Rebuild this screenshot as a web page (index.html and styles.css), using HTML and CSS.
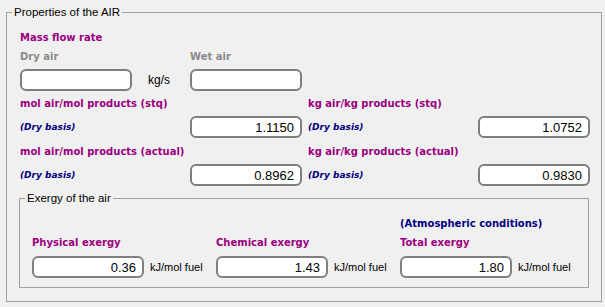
FILE: index.html
```html
<!DOCTYPE html>
<html lang="en">

<head>
    <meta charset="UTF-8">
    <title>Properties of the AIR</title>
    <link rel="stylesheet" href="styles.css">
</head>

<body>
    <fieldset class="panel">
        <legend>Properties of the AIR</legend>
        <div class="panel-body">
            <div class="title mass-title">Mass flow rate</div>
            <div class="mass">
                <div class="sub">Dry air</div>
                <div></div>
                <div class="sub">Wet air</div>
                <input type="text" class="box">
                <span class="unit">kg/s</span>
                <input type="text" class="box">
            </div>

            <div class="ratios">
                <div class="ratio">
                    <div class="title">mol air/mol products (stq)</div>
                    <div class="ratio-row">
                        <span class="basis">(Dry basis)</span>
                        <input type="text" class="box num" value="1.1150">
                    </div>
                    <div class="title">mol air/mol products (actual)</div>
                    <div class="ratio-row">
                        <span class="basis">(Dry basis)</span>
                        <input type="text" class="box num" value="0.8962">
                    </div>
                </div>
                <div class="ratio">
                    <div class="title">kg air/kg products (stq)</div>
                    <div class="ratio-row">
                        <span class="basis">(Dry basis)</span>
                        <input type="text" class="box num" value="1.0752">
                    </div>
                    <div class="title">kg air/kg products (actual)</div>
                    <div class="ratio-row">
                        <span class="basis">(Dry basis)</span>
                        <input type="text" class="box num" value="0.9830">
                    </div>
                </div>
            </div>

            <fieldset class="exergy">
                <legend>Exergy of the air</legend>
                <div class="exergy-body">
                    <div class="ex-col">
                        <div class="note"></div>
                        <div class="title">Physical exergy</div>
                        <div class="ex-row">
                            <input type="text" class="box num" value="0.36">
                            <span class="unit">kJ/mol fuel</span>
                        </div>
                    </div>
                    <div class="ex-col">
                        <div class="note"></div>
                        <div class="title">Chemical exergy</div>
                        <div class="ex-row">
                            <input type="text" class="box num" value="1.43">
                            <span class="unit">kJ/mol fuel</span>
                        </div>
                    </div>
                    <div class="ex-col">
                        <div class="note">(Atmospheric conditions)</div>
                        <div class="title">Total exergy</div>
                        <div class="ex-row">
                            <input type="text" class="box num" value="1.80">
                            <span class="unit">kJ/mol fuel</span>
                        </div>
                    </div>
                </div>
            </fieldset>
        </div>
    </fieldset>
</body>

</html>
```

FILE: styles.css
```css
html,
body {
    margin: 0;
    height: 307px;
    background-color: #f0f0f0;
    font-family: "Liberation Sans", Arial, sans-serif;
    font-size: 12px;
    color: #000;
    overflow: hidden;
}

fieldset {
    margin: 0;
    padding: 0;
    border: 1px solid #a0a0a0;
    min-width: 0;
}

legend {
    margin-left: 5px;
    padding: 0 2px;
    line-height: 13px;
    font-size: 11.5px;
}

.panel {
    margin: 6px 0 0 6px;
    width: 596px;
    height: 296px;
    box-sizing: border-box;
}

.panel-body {
    padding: 0 10px 0 13px;
}

.title {
    font-family: "DejaVu Sans", Verdana, sans-serif;
    font-weight: bold;
    font-size: 10px;
    line-height: 14px;
    color: #9b007f;
}

.mass-title {
    margin-top: 12px;
}

.mass {
    display: grid;
    grid-template-columns: 112px 58px 112px;
    grid-template-rows: 14px 22px;
    row-gap: 5px;
    margin-top: 5px;
    align-items: center;
}

.sub {
    font-family: "DejaVu Sans", Verdana, sans-serif;
    font-weight: bold;
    font-size: 10px;
    line-height: 14px;
    color: #8a8a8a;
}

.unit {
    padding-left: 6px;
    font-size: 11px;
}

.mass .unit {
    padding-left: 16px;
    font-size: 12px;
}

.box {
    box-sizing: border-box;
    width: 112px;
    height: 22px;
    margin: 0;
    padding: 0 6px;
    border: 2px solid #7f7f7f;
    border-radius: 6px;
    background: #fff;
    font-family: "Liberation Sans", Arial, sans-serif;
    font-size: 13px;
    outline: none;
}

.num {
    text-align: right;
}

.ratios {
    display: grid;
    grid-template-columns: 282px 282px;
    column-gap: 6px;
    margin-top: 6px;
}

.ratio .title:nth-of-type(3) {
    margin-top: 7px;
}

.ratio-row {
    display: flex;
    justify-content: space-between;
    align-items: center;
    margin-top: 5px;
}

.basis {
    font-family: "DejaVu Sans", Verdana, sans-serif;
    font-style: italic;
    font-weight: bold;
    font-size: 9px;
    color: #000080;
}

.exergy {
    margin: 6px 0 0 -1px;
    width: 570px;
    box-sizing: border-box;
}

.exergy-body {
    display: grid;
    grid-template-columns: 184px 184px 184px;
    padding: 0 0 9px 12px;
}

.note {
    height: 14px;
    margin-top: 12px;
    margin-bottom: 5px;
    font-family: "DejaVu Sans", Verdana, sans-serif;
    font-weight: bold;
    font-size: 10px;
    line-height: 14px;
    color: #000080;
}

.ex-row {
    display: flex;
    align-items: center;
    margin-top: 6px;
}
```
